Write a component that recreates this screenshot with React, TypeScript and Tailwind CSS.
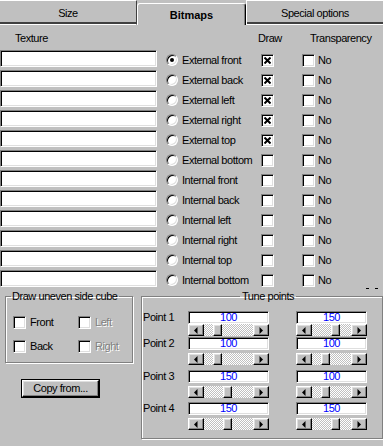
import React from "react";

const sunken =
  "border border-t-[#808080] border-l-[#808080] border-b-white border-r-white shadow-[inset_1px_1px_0_#000,inset_-1px_-1px_0_#dfdfdf]";
const raised =
  "border border-t-white border-l-white border-b-black border-r-black shadow-[inset_-1px_-1px_0_#808080,inset_1px_1px_0_#dfdfdf]";

const rows: [string, boolean][] = [
  ["External front", true],
  ["External back", true],
  ["External left", true],
  ["External right", true],
  ["External top", true],
  ["External bottom", false],
  ["Internal front", false],
  ["Internal back", false],
  ["Internal left", false],
  ["Internal right", false],
  ["Internal top", false],
  ["Internal bottom", false],
];

const points = [
  { name: "Point 1", a: 100, b: 150, mt: "mt-[8px]" },
  { name: "Point 2", a: 100, b: 100, mt: "mt-[1px]" },
  { name: "Point 3", a: 150, b: 100, mt: "mt-[5px]" },
  { name: "Point 4", a: 150, b: 150, mt: "mt-[4px]" },
];

function Check({ on, className = "" }: { on?: boolean; className?: string }) {
  return (
    <div className={`w-[13px] h-[13px] shrink-0 bg-white flex items-center justify-center ${sunken} ${className}`}>
      {on && (
        <svg width="7" height="7" viewBox="0 0 7 7">
          <path d="M0.5 0.5L6.5 6.5M6.5 0.5L0.5 6.5" stroke="#000" strokeWidth="2" />
        </svg>
      )}
    </div>
  );
}

function Radio({ on }: { on?: boolean }) {
  return (
    <div className="w-[12px] h-[12px] shrink-0 rounded-full bg-white border border-t-[#808080] border-l-[#808080] border-b-white border-r-white shadow-[inset_1px_1px_0_#000,inset_-1px_-1px_0_#dfdfdf] flex items-center justify-center">
      {on && <div className="w-[4px] h-[4px] rounded-full bg-black" />}
    </div>
  );
}

function Arrow({ dir }: { dir: "l" | "r" }) {
  return (
    <div className={`w-[16px] h-full shrink-0 bg-[#c0c0c0] flex items-center justify-center ${raised}`}>
      <svg width="4" height="7" viewBox="0 0 4 7">
        {dir === "l" ? <path d="M3.5 0L0 3.5L3.5 7Z" fill="#000" /> : <path d="M0.5 0L4 3.5L0.5 7Z" fill="#000" />}
      </svg>
    </div>
  );
}

function Scroll({ value, width }: { value: number; width: string }) {
  const off = value === 150 ? 19 : 9;
  return (
    <div className={`flex h-[12px] ${width}`}>
      <Arrow dir="l" />
      <div className="flex-1 h-full [background-image:repeating-conic-gradient(#c0c0c0_0%_25%,#ffffff_0%_50%)] [background-size:2px_2px]">
        <div className={`w-[9px] h-full bg-[#c0c0c0] ${raised}`} style={{ marginLeft: off }} />
      </div>
      <Arrow dir="r" />
    </div>
  );
}

function Edit({ value, width }: { value: number; width: string }) {
  return (
    <div className={`h-[13px] bg-white text-[#0000ff] text-center leading-[10px] ${sunken} ${width}`}>{value}</div>
  );
}

export default function App() {
  return (
    <div className="w-[383px] h-[446px] overflow-hidden bg-[#c0c0c0] text-black text-[11px] leading-[13px] tracking-[-0.45px] font-['Liberation_Sans',Arial,sans-serif]">
      {/* tabs */}
      <div className="flex h-[25px]">
        <div className="w-[137px] h-[25px] pt-[1px] flex items-center justify-center border-t border-t-white border-r border-r-[#404040] border-b border-b-white shadow-[inset_0_-2px_0_#404040]">
          Size
        </div>
        <div className="w-[109px] mt-[3px] h-[22px] pt-[1px] flex items-center justify-center font-bold tracking-normal rounded-t-[3px] border-t border-l border-t-white border-l-white border-r border-r-black shadow-[inset_-1px_0_0_#808080]">
          Bitmaps
        </div>
        <div className="w-[137px] h-[25px] pt-[1px] flex items-center justify-center border-t border-l border-t-white border-l-white border-b border-b-white shadow-[inset_0_-2px_0_#404040]">
          Special options
        </div>
      </div>

      {/* headers */}
      <div className="flex h-[25px] pt-[7px]">
        <div className="w-[258px] pl-[15px]">Texture</div>
        <div className="w-[52px]">Draw</div>
        <div>Transparency</div>
      </div>

      {/* texture rows */}
      {rows.map(([label, draw], i) => (
        <div key={label} className="flex items-center h-[20px]">
          <div className={`w-[157px] h-[17px] self-start bg-white ${sunken}`} />
          <div className="ml-[9px]">
            <Radio on={i === 0} />
          </div>
          <div className="ml-[4px] w-[79px] whitespace-nowrap">{label}</div>
          <Check on={draw} />
          <Check className="ml-[28px]" />
          <div className="ml-[3px]">No</div>
          {i === rows.length - 1 && (
            <div className="ml-auto mr-[5px] self-end mb-[1px] flex gap-[6px]">
              <span className="w-[3px] h-[1px] bg-black" />
              <span className="w-[3px] h-[1px] bg-black" />
            </div>
          )}
        </div>
      ))}

      {/* bottom groups */}
      <div className="flex">
        <div className="ml-[5px] w-[128px]">
          <fieldset className="h-[73px] border border-[#808080] shadow-[inset_1px_1px_0_#fff,1px_1px_0_#fff]">
            <legend className="ml-[5px] px-[1px]">Draw uneven side cube</legend>
            <div className="grid grid-cols-[65px_auto] gap-y-[11px] pl-[7px] pt-[13px]">
              <div className="flex items-center">
                <Check />
                <span className="ml-[4px]">Front</span>
              </div>
              <div className="flex items-center">
                <Check />
                <span className="ml-[4px] text-[#808080] [text-shadow:1px_1px_0_#fff]">Left</span>
              </div>
              <div className="flex items-center">
                <Check />
                <span className="ml-[4px]">Back</span>
              </div>
              <div className="flex items-center">
                <Check />
                <span className="ml-[4px] text-[#808080] [text-shadow:1px_1px_0_#fff]">Right</span>
              </div>
            </div>
          </fieldset>
          <div className="mt-[16px] ml-[16px] w-[79px] h-[19px] border border-black">
            <div className={`w-full h-full flex items-center justify-center ${raised}`}>Copy from...</div>
          </div>
        </div>

        <fieldset className="ml-[8px] w-[242px] h-[149px] border border-[#808080] shadow-[inset_1px_1px_0_#fff,1px_1px_0_#fff]">
          <legend className="ml-[98px] px-[2px]">Tune points</legend>
          {points.map((p) => (
            <div key={p.name} className={`grid grid-cols-[46px_81px_27px_71px] ${p.mt}`}>
              <div className="pl-[1px] h-[13px] leading-[13px]">{p.name}</div>
              <Edit value={p.a} width="w-[81px]" />
              <div />
              <Edit value={p.b} width="w-[71px]" />
              <div />
              <div className={p.name === "Point 1" ? "" : "mt-[3px]"}>
                <Scroll value={p.a} width="w-[81px]" />
              </div>
              <div />
              <div className={p.name === "Point 1" ? "" : "mt-[3px]"}>
                <Scroll value={p.b} width="w-[71px]" />
              </div>
            </div>
          ))}
        </fieldset>
      </div>
    </div>
  );
}
